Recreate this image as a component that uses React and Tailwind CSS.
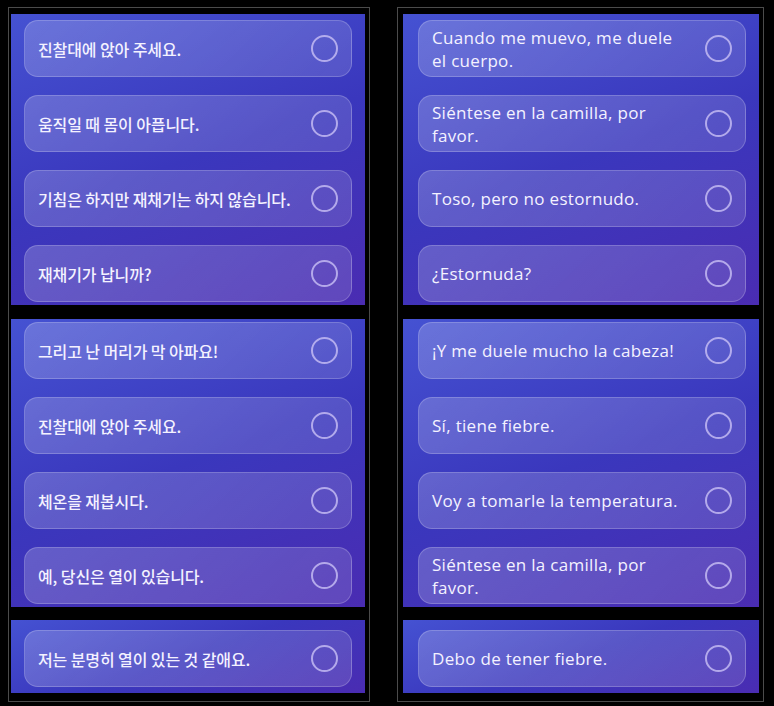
import React from "react"

const ko = [
  ["진찰대에 앉아 주세요.", "움직일 때 몸이 아픕니다.", "기침은 하지만 재채기는 하지 않습니다.", "재채기가 납니까?"],
  ["그리고 난 머리가 막 아파요!", "진찰대에 앉아 주세요.", "체온을 재봅시다.", "예, 당신은 열이 있습니다."],
  ["저는 분명히 열이 있는 것 같애요."],
]

const es = [
  ["Cuando me muevo, me duele el cuerpo.", "Siéntese en la camilla, por favor.", "Toso, pero no estornudo.", "¿Estornuda?"],
  ["¡Y me duele mucho la cabeza!", "Sí, tiene fiebre.", "Voy a tomarle la temperatura.", "Siéntese en la camilla, por favor."],
  ["Debo de tener fiebre."],
]

// one answer option row
function Option({ text, lang }) {
  const font =
    lang === "ko"
      ? "font-['Noto_Sans_CJK_KR',sans-serif] font-medium text-[16px] tracking-[-0.1px]"
      : "font-['Open_Sans',sans-serif] font-medium text-[17px] tracking-[0.3px] leading-[23px] max-w-[252px]"
  return (
    <div className="flex items-center justify-between gap-[10px] h-[57px] w-[328px] px-[13px] rounded-[14px] border border-white/20 bg-[linear-gradient(135deg,rgba(255,255,255,0.2),rgba(255,255,255,0.13))]">
      <span className={`flex-1 text-[#f4f2ff] ${font}`}>{text}</span>
      <span className="w-[27px] h-[27px] shrink-0 rounded-full border-2 border-[#c9c0f5]/80" />
    </div>
  )
}

function Panel({ items, lang, className }) {
  return (
    <div
      className={`flex flex-col gap-[18px] bg-[linear-gradient(160deg,#4552d2_0%,#3a37bd_50%,#4a2cb2_100%)] ${className}`}
    >
      {items.map((t, i) => (
        <Option key={i} text={t} lang={lang} />
      ))}
    </div>
  )
}

function Column({ data, lang, width, panelWidth, padLeft, cardLeft }) {
  return (
    <div className={`h-[695px] border border-[#4b4b4b] pt-[6px] ${width} ${padLeft}`}>
      <div className={`flex flex-col ${panelWidth}`}>
        <Panel items={data[0]} lang={lang} className={`h-[291px] pt-[6px] ${cardLeft}`} />
        <Panel items={data[1]} lang={lang} className={`h-[288px] pt-[3px] mt-[14px] ${cardLeft}`} />
        <Panel items={data[2]} lang={lang} className={`h-[73px] pt-[10px] mt-[13px] ${cardLeft}`} />
      </div>
    </div>
  )
}

export default function App() {
  return (
    <div className="w-[774px] h-[706px] bg-black flex pt-[7px] pl-[8px] gap-[27px]">
      <Column data={ko} lang="ko" width="w-[362px]" panelWidth="w-[354px]" padLeft="pl-[2px]" cardLeft="pl-[13px]" />
      <Column data={es} lang="es" width="w-[367px]" panelWidth="w-[356px]" padLeft="pl-[5px]" cardLeft="pl-[15px]" />
    </div>
  )
}
